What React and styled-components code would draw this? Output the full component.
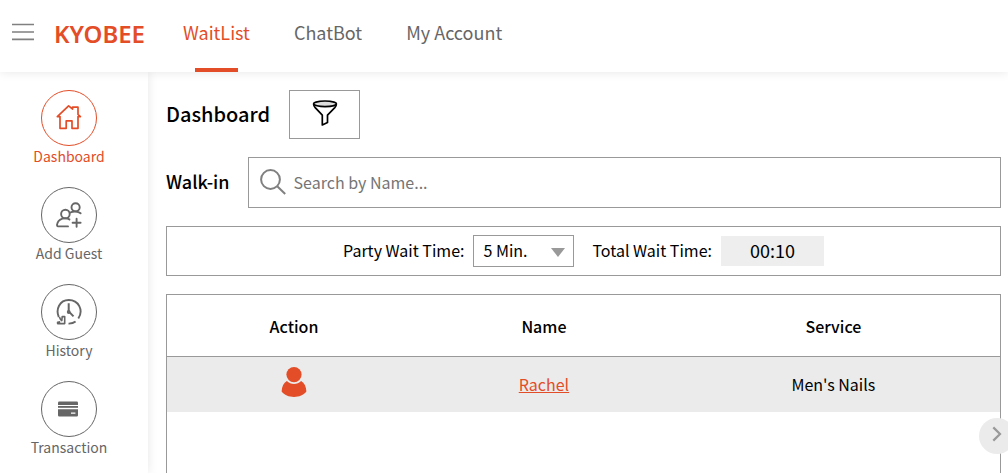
import React, { useState } from "react";
import styled, { createGlobalStyle } from "styled-components";

const sideItems = [
    { id: "dashboard", label: "Dashboard", Icon: HomeIcon },
    { id: "guest", label: "Add Guest", Icon: GuestIcon },
    { id: "history", label: "History", Icon: HistoryIcon },
    { id: "transaction", label: "Transaction", Icon: CardIcon },
];

const topLinks = ["WaitList", "ChatBot", "My Account"];

const guests = [{ name: "Rachel", service: "Men's Nails" }];

function App() {

    const [tab, setTab] = useState("WaitList");
    const [section, setSection] = useState("dashboard");
    const [search, setSearch] = useState("");
    const [wait, setWait] = useState("5");

    return (
        <>
            <GlobalStyle />
            <Page>
                <Header>
                    <MenuButton type="button" aria-label="Menu">
                        <MenuIcon />
                    </MenuButton>
                    <Logo href="#">KYOBEE</Logo>
                    <TopNav>
                        {topLinks.map((link) => (
                            <TopLink key={link} href="#" $active={tab === link} onClick={() => setTab(link)}>
                                {link}
                            </TopLink>
                        ))}
                    </TopNav>
                </Header>
                <Body>
                    <Sidebar>
                        {sideItems.map(({ id, label, Icon }) => (
                            <SideLink key={id} href="#" $active={section === id} onClick={() => setSection(id)}>
                                <Circle><Icon /></Circle>
                                {label}
                            </SideLink>
                        ))}
                    </Sidebar>
                    <Main>
                        <TitleRow>
                            <Title>Dashboard</Title>
                            <FilterButton type="button" aria-label="Filter">
                                <FunnelIcon />
                            </FilterButton>
                        </TitleRow>
                        <SearchRow>
                            <SearchLabel htmlFor="search">Walk-in</SearchLabel>
                            <SearchBox>
                                <SearchIcon />
                                <SearchInput
                                    id="search"
                                    type="text"
                                    placeholder="Search by Name..."
                                    value={search}
                                    onChange={(e) => setSearch(e.target.value)}
                                />
                            </SearchBox>
                        </SearchRow>
                        <WaitBar>
                            <WaitGroup>
                                <WaitLabel htmlFor="party-wait">Party Wait Time:</WaitLabel>
                                <SelectBox>
                                    <Select id="party-wait" value={wait} onChange={(e) => setWait(e.target.value)}>
                                        <option value="5">5 Min.</option>
                                        <option value="10">10 Min.</option>
                                        <option value="15">15 Min.</option>
                                    </Select>
                                    <Arrow />
                                </SelectBox>
                            </WaitGroup>
                            <WaitGroup>
                                <WaitLabel htmlFor="total-wait">Total Wait Time:</WaitLabel>
                                <Total id="total-wait">00:10</Total>
                            </WaitGroup>
                        </WaitBar>
                        <TablePanel>
                            <Table>
                                <thead>
                                    <tr>
                                        <Th $width="30.5%">Action</Th>
                                        <Th $width="29.5%">Name</Th>
                                        <Th $width="40%">Service</Th>
                                    </tr>
                                </thead>
                                <tbody>
                                    {guests.map((guest) => (
                                        <tr key={guest.name}>
                                            <Td>
                                                <ActionButton type="button" aria-label="Guest actions">
                                                    <PersonIcon />
                                                </ActionButton>
                                            </Td>
                                            <Td><GuestLink href="#">{guest.name}</GuestLink></Td>
                                            <Td>{guest.service}</Td>
                                        </tr>
                                    ))}
                                </tbody>
                            </Table>
                        </TablePanel>
                    </Main>
                </Body>
                <NextButton type="button" aria-label="Next">
                    <ChevronIcon />
                </NextButton>
            </Page>
        </>
    );
}

export default App;

function MenuIcon() {
    return (
        <svg width="22" height="18" viewBox="0 0 22 18" fill="none" stroke="#808080" strokeWidth="1.7">
            <path d="M0 1.5H22M0 9H22M0 16.3H22" />
        </svg>
    );
}

function HomeIcon() {
    return (
        <svg width="26" height="26" viewBox="0 1 26 26" fill="none" stroke="currentColor" strokeWidth="1.7" strokeLinejoin="round" strokeLinecap="round">
            <path d="M4 12.6H1.3L12.6 1.9L16.6 5V3.2H22V10.4L24.4 12.6H22V24.3H16V16.8H10.2V24.3H4Z" />
        </svg>
    );
}

function GuestIcon() {
    return (
        <svg width="26" height="26" viewBox="0 0 26 26" fill="none" stroke="currentColor" strokeWidth="1.9" strokeLinecap="round">
            <circle cx="9.4" cy="12" r="4.3" />
            <circle cx="19.6" cy="5.3" r="4.1" />
            <path d="M12 24.4H2.2C.9 24.4 .9 22.8 1.3 21.6C2.2 18.6 5 16.4 9.3 16.4C11 16.4 12.4 16.8 13.4 17.4" />
            <path d="M14.4 10.5C17.5 8.9 22 9.1 24.6 11.3" />
            <path d="M20.6 16.7V24.7M16.6 20.7H24.6" />
        </svg>
    );
}

function HistoryIcon() {
    return (
        <svg width="26" height="26" viewBox="0 1 26 26" fill="none" stroke="currentColor" strokeWidth="1.9" strokeLinejoin="round">
            <path d="M2.8 19C-.5 11.5 3.4 2.1 12.8 2C22.6 2 27.8 12.1 22.3 20.5" />
            <path d="M12.5 25.6C15.7 25.7 17.6 25.1 19.6 23.6" />
            <path d="M12.7 5.2V13.4L17.5 18.4" strokeWidth="2" />
            <circle cx="12.7" cy="14" r="1.9" fill="currentColor" stroke="none" />
            <path d="M3.4 18.9C4 20.7 4.7 21.8 5.8 22.6L6.2 18.6H8.7V25.6H1.6V24.2L4.2 23.9" strokeWidth="1.6" />
        </svg>
    );
}

function CardIcon() {
    return (
        <svg width="22" height="16" viewBox="1 0 22 16" fill="currentColor">
            <path d="M1 1.8Q1 .6 2.2 .6H19.8Q21 .6 21 1.8V4H1Z" />
            <path d="M1 5H21V6.8H1Z" />
            <path fillRule="evenodd" d="M1 8.2H21V14.2Q21 15.4 19.8 15.4H2.2Q1 15.4 1 14.2ZM14 11.4V12.8H18.4V11.4Z" />
        </svg>
    );
}

function FunnelIcon() {
    return (
        <svg width="26" height="26" viewBox="0 0 26 26" fill="none" stroke="#000" strokeWidth="1.7" strokeLinejoin="round">
            <ellipse cx="13" cy="3.8" rx="11.4" ry="2.8" fill="#ddd" />
            <path d="M1.6 4.2C1.7 5.6 2.3 6.6 3.2 7.6L10.3 15.2V25L15.5 22.6V15.2L22.8 7.6C23.7 6.6 24.3 5.6 24.4 4.2" />
        </svg>
    );
}

function SearchIcon() {
    return (
        <svg width="26" height="26" viewBox="0 0 26 26" fill="none" stroke="#808080" strokeWidth="2">
            <circle cx="10.5" cy="10.5" r="9.4" />
            <path d="M17.2 17.2L25.2 25" />
        </svg>
    );
}

function PersonIcon() {
    return (
        <svg width="26" height="30" viewBox="0 0 26 30" fill="#e34d27">
            <circle cx="13" cy="7.6" r="7.6" />
            <path d="M5.9 14.1C9.5 17.9 16.5 17.9 20.1 14.1C23.4 15.8 25.1 19.6 25.4 24.6C22.8 28.2 18 30 13 30C8 30 3.2 28.2 .6 24.6C.9 19.6 2.6 15.8 5.9 14.1Z" />
        </svg>
    );
}

function ChevronIcon() {
    return (
        <svg width="10" height="16" viewBox="0 0 10 16" fill="none" stroke="#999" strokeWidth="2.2">
            <path d="M1.3 1.4L8 8L1.3 14.6" />
        </svg>
    );
}

const GlobalStyle = createGlobalStyle`
  *{
    box-sizing: border-box;
  }
  body{
    margin: 0;
    background-color: #fff;
    color: #000;
    font-family: "Noto Sans CJK SC", "Noto Sans", sans-serif;
    font-size: 16px;
    line-height: 24px;
  }
  button, input, select{
    font: inherit;
    color: inherit;
  }
  svg{
    display: block;
    flex: none;
  }
`;

const Page = styled.div`
  height: 100vh;
  display: flex;
  flex-direction: column;
  overflow: hidden;
`;

const Header = styled.header`
  position: relative;
  z-index: 1;
  flex: none;
  height: 72px;
  padding: 0 12px;
  display: flex;
  align-items: stretch;
  background-color: #fff;
  box-shadow: 0 0 10px rgba(0, 0, 0, .1);
`;

const MenuButton = styled.button`
  padding: 0 0 8px;
  border: none;
  background: none;
  display: flex;
  align-items: center;
  cursor: pointer;
`;

const Logo = styled.a`
  margin-left: 20px;
  padding-bottom: 4px;
  display: flex;
  align-items: center;
  color: #e34d27;
  font-family: "Noto Sans", sans-serif;
  font-size: 24px;
  font-weight: 600;
  text-decoration: none;
`;

const TopNav = styled.nav`
  margin-left: 38px;
  display: flex;
  gap: 44px;
`;

const TopLink = styled.a`
  position: relative;
  padding-bottom: 8px;
  display: flex;
  align-items: center;
  color: ${(props) => (props.$active ? "#e34d27" : "#666")};
  font-size: 18px;
  text-decoration: none;
  &::after{
    content: "";
    position: absolute;
    left: 12px;
    right: 12px;
    bottom: 0;
    height: 4px;
    background-color: ${(props) => (props.$active ? "#e34d27" : "transparent")};
  }
`;

const Body = styled.div`
  flex: 1;
  min-height: 0;
  display: flex;
`;

const Sidebar = styled.nav`
  flex: none;
  width: 148px;
  padding: 18px 10px 0 0;
  display: flex;
  flex-direction: column;
  align-items: center;
  gap: 21px;
  box-shadow: 0 0 10px rgba(0, 0, 0, .1);
`;

const SideLink = styled.a`
  display: flex;
  flex-direction: column;
  align-items: center;
  color: ${(props) => (props.$active ? "#e34d27" : "#666")};
  font-size: 14px;
  line-height: 20px;
  text-decoration: none;
`;

const Circle = styled.span`
  width: 56px;
  height: 56px;
  display: flex;
  align-items: center;
  justify-content: center;
  border: 1px solid currentColor;
  border-radius: 50%;
`;

const Main = styled.main`
  flex: 1;
  min-width: 0;
  padding: 18px 7px 0 18px;
  display: flex;
  flex-direction: column;
  gap: 18px;
`;

const TitleRow = styled.div`
  display: flex;
  align-items: center;
  gap: 19px;
`;

const Title = styled.h1`
  margin: 0;
  padding-bottom: 2px;
  font-size: 20px;
  font-weight: 500;
`;

const FilterButton = styled.button`
  width: 71px;
  height: 49px;
  padding: 0 0 4px;
  display: flex;
  align-items: center;
  justify-content: center;
  border: 1px solid #999;
  background-color: #fff;
  cursor: pointer;
`;

const SearchRow = styled.div`
  display: flex;
  align-items: center;
  gap: 18px;
`;

const SearchLabel = styled.label`
  padding-bottom: 4px;
  font-size: 18px;
  font-weight: 500;
`;

const SearchBox = styled.div`
  flex: 1;
  height: 51px;
  padding: 0 11px 2px;
  display: flex;
  align-items: center;
  gap: 8px;
  border: 1px solid #999;
`;

const SearchInput = styled.input`
  flex: 1;
  min-width: 0;
  padding: 0;
  border: none;
  outline: none;
  background: none;
  &::placeholder{
    color: #757575;
    opacity: 1;
  }
`;

const WaitBar = styled.div`
  min-height: 50px;
  display: flex;
  align-items: center;
  justify-content: center;
  gap: 18px;
  border: 1px solid #999;
`;

const WaitGroup = styled.div`
  display: flex;
  align-items: center;
  gap: 9px;
`;

const WaitLabel = styled.label`
  padding-bottom: 2px;
`;

const SelectBox = styled.div`
  position: relative;
`;

const Select = styled.select`
  width: 101px;
  height: 32px;
  padding: 0 9px 2px;
  display: block;
  appearance: none;
  border: 1px solid #999;
  border-radius: 0;
  background-color: #fff;
`;

const Arrow = styled.span`
  position: absolute;
  top: 13px;
  right: 9px;
  border-top: 9px solid #999;
  border-left: 7px solid transparent;
  border-right: 7px solid transparent;
  pointer-events: none;
`;

const Total = styled.output`
  width: 103px;
  height: 30px;
  padding-bottom: 2px;
  display: flex;
  align-items: center;
  justify-content: center;
  background-color: #eee;
  font-size: 18px;
`;

const TablePanel = styled.div`
  flex: 1 0 240px;
  border: 1px solid #999;
`;

const Table = styled.table`
  width: 100%;
  table-layout: fixed;
  border-collapse: separate;
  border-spacing: 0;
  text-align: center;
`;

const Th = styled.th`
  width: ${(props) => props.$width};
  height: 62px;
  padding: 0;
  border-bottom: 1px solid #999;
  font-weight: 500;
`;

const Td = styled.td`
  height: 55px;
  padding: 0 0 2px;
  background-color: #ebebeb;
`;

const ActionButton = styled.button`
  padding: 0 0 4px;
  border: none;
  background: none;
  vertical-align: middle;
  cursor: pointer;
`;

const GuestLink = styled.a`
  color: #e34d27;
`;

const NextButton = styled.button`
  position: fixed;
  right: -7px;
  bottom: 19px;
  width: 36px;
  height: 36px;
  padding: 0 0 4px;
  display: flex;
  align-items: center;
  justify-content: center;
  border: none;
  border-radius: 50%;
  background-color: #ebebeb;
  cursor: pointer;
`;
